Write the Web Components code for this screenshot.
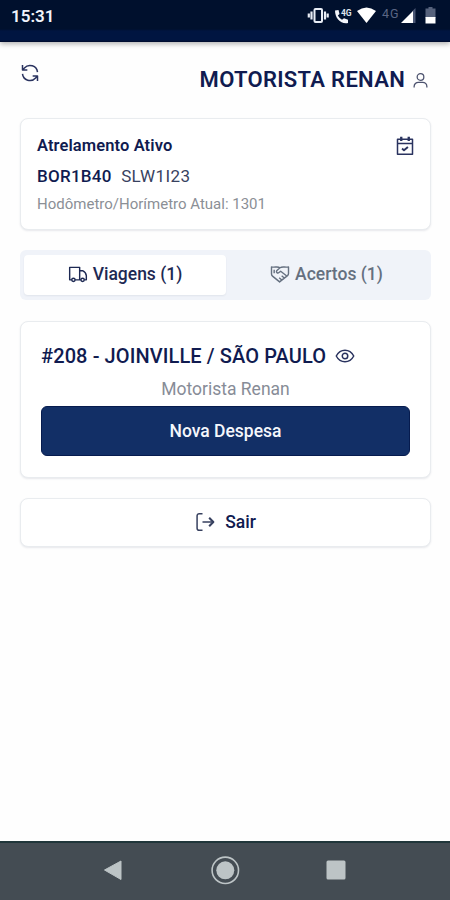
<!DOCTYPE html>
<html lang="pt-BR">
<head>
<meta charset="utf-8">
<meta name="viewport" content="width=device-width, initial-scale=1">
<title>Motorista</title>
<style>
  body {
    background: #fefefe;
    color: #101b50;
    font-family: Roboto, "Liberation Sans", sans-serif;
    margin: 0;
  }
</style>
</head>
<body>
<driver-app></driver-app>

<script>
/*
  Icon component
  -> Line icons on a 24 unit grid, coloured by currentColor

  Props:
  name (string): key of the icons list
*/
const icons = {
  refresh: '<path d="M21 11a9 9 0 0 0-15.700-5L3 8.300M3 2.500v5.800h5.800M3 13a9 9 0 0 0 15.700 5l2.300-2.300m0 5.800v-5.800h-5.800"/>',
  user: '<circle cx="12" cy="7" r="4.700"/><path d="M3 22v-1.500a6 6 0 0 1 6-6h6a6 6 0 0 1 6 6V22"/>',
  calendar: '<path d="M3 4h18v18H3zM3 9h18"/><path d="M7.500 1v5M16.500 1v5" stroke-width="2.800"/><path d="m8.500 15 2.300 2.200 4.700-4" stroke-width="2.300"/>',
  truck: '<path d="M4.500 19H2V4h12v15H8.500M14 8h3.500q4 2 4.500 6v5h-2.500M14 19h1.500"/><circle cx="6.500" cy="19" r="2"/><circle cx="17.500" cy="19" r="2"/>',
  hands: '<path d="M12 4.500C9 2.500 6 4.500 1.800 3.500v8.500q0 1.500 1.200 2.500l8.500 7 9.500-7.500q1.200-1 1.200-2.500V3.500C18 4.500 15 2.500 12 4.500L8 8.200c-1 1.600 1 3.300 2.800 2l2-1.500 7.700 6M5 7v4M14 14l3.500 3M11 16.500l3.500 3"/>',
  eye: '<path d="M1.500 12C4 7.300 7.500 5 12 5s8 2.300 10.500 7C20 16.700 16.500 19 12 19s-8-2.300-10.500-7z"/><circle cx="12" cy="12" r="3.300"/>',
  logout: '<path d="M9 2H5a2.500 2.500 0 0 0-2.500 2.500v15A2.500 2.500 0 0 0 5 22h4M9 12h12"/><path d="M17 7l5 5-5 5" stroke-width="2.500"/>'
}

class LineIcon extends HTMLElement {
  connectedCallback() {
    this.attachShadow({ mode: 'open' }).innerHTML = `
      <style>
        :host {
          display: block;
          flex: none;
          height: var(--icon-size, 18px);
          width: var(--icon-size, 18px);
        }

        svg {
          display: block;
          fill: none;
          height: 100%;
          stroke: currentColor;
          stroke-linejoin: round;
          stroke-width: var(--icon-stroke, 1.8);
          width: 100%;
        }
      </style>
      <svg viewBox="0 0 24 24">${icons[this.getAttribute('name')]}</svg>
    `
  }
}

customElements.define('line-icon', LineIcon)

// registers an element that only needs its markup cloned
const define = (name, html) => {
  const template = document.createElement('template')
  template.innerHTML = html

  customElements.define(name, class extends HTMLElement {
    constructor() {
      super()

      this.attachShadow({ mode: 'open' })
      this.shadowRoot.appendChild(template.content.cloneNode(true))
    }
  })
}

define('status-bar', `
  <style>
    :host {
      background: linear-gradient(#00102d 0 29px, #001541 31px 40px, #000a2b 42px);
      box-shadow: 0 2px 5px #0000004d;
      box-sizing: border-box;
      color: #f1f4fb;
      display: flex;
      height: 42px;
      justify-content: space-between;
      padding: 6px 13px 0 11px;
    }

    time {
      font-size: 17px;
      font-weight: 600;
      line-height: 20px;
    }

    svg {
      display: block;
      height: 20px;
      width: 130px;
    }
  </style>
  <time>15:31</time>
  <svg viewBox="307 6 130 20">
    <g fill="none" stroke="#e8edf5" stroke-width="2">
      <rect x="314.500" y="9" width="7.500" height="13" rx="1"/>
      <path d="M311.500 11.500v8M325 11.500v8M308.800 13.500v4M327.700 13.500v4" stroke-width="2.200"/>
    </g>
    <path d="M335 10.500l3.500-.5 1 4-1.700 1.500q1.700 3 4.200 4.200l2-1.500 4 1.500v3.300c-7 1.500-13-4.500-13-12.500z" fill="#f4f6fa"/>
    <text x="341" y="15.500" font-size="8.500" font-weight="700" fill="#dfe4ee" textLength="10.500">4G</text>
    <path d="M357 11q9.500-7 19 0l-9.500 12z" fill="#fff"/>
    <text x="382" y="17.500" font-size="12.500" fill="#5b6684" textLength="16.500">4G</text>
    <path d="M415.500 8v15h-3V11z" fill="#4a5674"/>
    <path d="M401 23l12-12v12z" fill="#fff"/>
    <path d="M428.500 7h4v1.500h3V18h-10V8.500h3z" fill="#56627c"/>
    <path d="M425.500 17h10v6.500h-10z" fill="#fff"/>
  </svg>
`)

define('user-header', `
  <style>
    :host {
      box-sizing: border-box;
      display: flex;
      height: 76px;
      justify-content: space-between;
      padding: 21px 21px 0 20px;
    }

    .refresh {
      --icon-size: 20px;
      color: #2a335f;
    }

    .user {
      align-items: center;
      display: flex;
      gap: 7px;
      height: 34px;
    }

    .user line-icon {
      --icon-size: 17px;
      color: #4c526e;
      margin-top: 1px;
    }

    h1 {
      font-size: 22px;
      font-weight: 600;
      letter-spacing: 0.3px;
      line-height: 32px;
      margin: 0;
    }
  </style>
  <line-icon class="refresh" name="refresh"></line-icon>
  <div class="user">
    <h1><slot></slot></h1>
    <line-icon name="user"></line-icon>
  </div>
`)

define('outline-card', `
  <style>
    :host {
      background: #fff;
      border: 1px solid #e9ecef;
      border-radius: 8px;
      box-shadow: 0 1px 2px #1c2c4a1a;
      box-sizing: border-box;
      display: block;
    }
  </style>
  <slot></slot>
`)

define('hitch-info', `
  <style>
    :host {
      display: flex;
      justify-content: space-between;
      padding: 12px 15px 0 16px;
    }

    p {
      line-height: 30px;
      margin: 0;
      white-space: nowrap;
    }

    .title {
      font-size: 16.500px;
      font-weight: 600;
      letter-spacing: 0.1px;
    }

    .plates {
      display: flex;
      font-size: 17px;
      font-weight: 500;
      gap: 9.500px;
      letter-spacing: 0.25px;
    }

    .plates span + span {
      color: #38425f;
      font-weight: 400;
      letter-spacing: 0.4px;
    }

    .meter {
      color: #8b8f96;
      font-size: 15px;
      letter-spacing: 0;
      line-height: 27px;
    }

    line-icon {
      --icon-size: 20px;
      color: #2a335f;
      margin-top: 5px;
    }
  </style>
  <div>
    <p class="title">Atrelamento Ativo</p>
    <p class="plates"><span>BOR1B40</span><span>SLW1I23</span></p>
    <p class="meter">Hodômetro/Horímetro Atual: 1301</p>
  </div>
  <line-icon name="calendar"></line-icon>
`)

define('tab-bar', `
  <style>
    :host {
      background: #f0f3f9;
      border-radius: 6px;
      box-sizing: border-box;
      display: grid;
      grid-template-columns: 202px 1fr;
      height: 50px;
      padding: 5px 4px;
    }

    div {
      align-items: center;
      border-radius: 4px;
      color: #657080;
      display: flex;
      font-size: 17.500px;
      font-weight: 500;
      gap: 5px;
      justify-content: center;
      padding-bottom: 2px;
    }

    .active {
      background: #fff;
      box-shadow: 0 1px 2px #1c2c4a12;
      color: #1d2953;
    }

    line-icon {
      --icon-size: 20px;
      --icon-stroke: 1.7;
    }
  </style>
  <div class="active"><line-icon name="truck"></line-icon><span>Viagens (1)</span></div>
  <div><line-icon name="hands"></line-icon><span>Acertos (1)</span></div>
`)

define('trip-info', `
  <style>
    :host {
      display: block;
      padding: 18px 20px 0;
    }

    .route {
      align-items: center;
      display: flex;
      gap: 9px;
      height: 33px;
    }

    h2 {
      font-size: 20px;
      font-weight: 500;
      letter-spacing: 0.1px;
      margin: 0;
      white-space: nowrap;
    }

    line-icon {
      --icon-size: 20px;
      color: #2a335f;
    }

    p {
      color: #878c97;
      font-size: 17.500px;
      line-height: 33px;
      margin: 0;
      text-align: center;
    }

    button {
      background: #122f66;
      border: 1px solid #061b4e;
      border-radius: 6px;
      color: #f5f7fc;
      display: block;
      font: 500 17.500px Roboto, sans-serif;
      height: 50px;
      padding: 0;
      width: 100%;
    }
  </style>
  <div class="route">
    <h2>#208 - JOINVILLE / SÃO PAULO</h2>
    <line-icon name="eye"></line-icon>
  </div>
  <p>Motorista Renan</p>
  <button>Nova Despesa</button>
`)

define('exit-button', `
  <style>
    :host {
      align-items: center;
      display: flex;
      font-size: 17.500px;
      font-weight: 500;
      gap: 10px;
      height: 47px;
      justify-content: center;
    }

    line-icon {
      --icon-size: 20px;
      color: #37405f;
    }
  </style>
  <line-icon name="logout"></line-icon>
  <span>Sair</span>
`)

define('system-nav', `
  <style>
    :host {
      background: #444c53;
      border-top: 2px solid #20363a;
      box-sizing: border-box;
      display: block;
      height: 59px;
    }

    svg {
      display: block;
      height: 57px;
      width: 450px;
    }
  </style>
  <svg viewBox="0 843 450 57" fill="#bdc4c6">
    <path d="M121 861v18.500L104.500 870z" stroke="#bdc4c6" stroke-linejoin="round"/>
    <circle cx="225.300" cy="870.300" r="9"/>
    <circle cx="225.300" cy="870.300" r="13.200" fill="none" stroke="#bdc4c6" stroke-width="1.600"/>
    <rect x="326.500" y="860.500" width="19" height="19" rx="1.500"/>
  </svg>
`)

define('driver-app', `
  <style>
    :host {
      display: flex;
      flex-direction: column;
      height: 900px;
      overflow: hidden;
      width: 450px;
    }

    main {
      align-content: start;
      display: grid;
      flex: 1;
      grid-template-rows: 112px 50px 157px 49px;
      padding: 0 19px 0 20px;
      row-gap: 20.300px;
    }
  </style>
  <status-bar></status-bar>
  <user-header>MOTORISTA RENAN</user-header>
  <main>
    <outline-card><hitch-info></hitch-info></outline-card>
    <tab-bar></tab-bar>
    <outline-card><trip-info></trip-info></outline-card>
    <outline-card><exit-button></exit-button></outline-card>
  </main>
  <system-nav></system-nav>
`)
</script>
</body>
</html>
